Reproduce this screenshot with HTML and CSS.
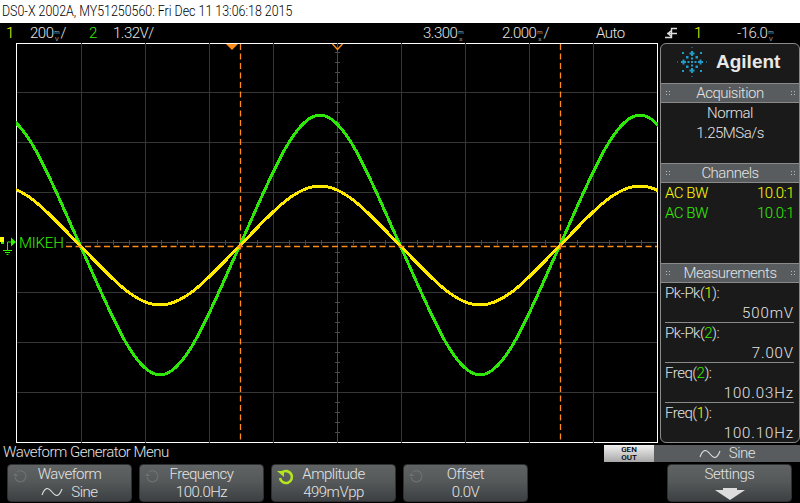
FILE: index.html
```html
<!DOCTYPE html>
<html>
<head>
    <meta charset="UTF-8">
    <title>DSO-X 2002A</title>
    <link rel="stylesheet" href="styles.css">
</head>
<body>
    <div class="title"><span>DS0-X 2002A, MY51250560: Fri Dec 11 13:06:18 2015</span></div>
    <div class="status">
        <span class="status__item s1 yellow">1</span>
        <span class="status__item s2">200<span class="unit">m<br>V</span>/</span>
        <span class="status__item s3 green">2</span>
        <span class="status__item s4">1.32V/</span>
        <span class="status__item s5">3.300<span class="unit">m<br>s</span></span>
        <span class="status__item s6">2.000<span class="unit">m<br>s</span>/</span>
        <span class="status__item s7">Auto</span>
        <svg class="status__item s8" width="14" height="14" viewBox="0 0 14 14"><path d="M0 11.500h6.500V2.500H12M2 7.500h10M7 4L3 7.500 7 11" fill="none" stroke="#ddd" stroke-width="1.400"/></svg>
        <span class="status__item s9 yellow">1</span>
        <span class="status__item s10">-16.0<span class="unit">m<br>V</span></span>
    </div>
    <div class="middle">
        <div class="rail">
            <svg class="ground" width="16" height="20" viewBox="0 0 16 20">
                <path d="M0 1h4v5H0z" fill="#ffff00"/>
                <path d="M1 7h3" stroke="#33f000" stroke-width="2"/>
                <path d="M11 6H7.500V14" fill="none" stroke="#33f000"/>
                <path d="M11 1.500L16 6l-5 4.500z" fill="#33f000"/>
                <path d="M3 14.500h9M5 16.500h5M6.500 18.500h2" stroke="#33f000"/>
            </svg>
        </div>
        <div class="plot">
            <svg class="scope" width="642" height="400" viewBox="16 43 642 400">
                <g class="grid">
                    <path d="M81.500 43V443M145.500 43V443M209.500 43V443M273.500 43V443M401.500 43V443M465.500 43V443M529.500 43V443M593.500 43V443"/>
                    <path d="M17 92.500H657M17 142.500H657M17 192.500H657M17 292.500H657M17 342.500H657M17 392.500H657"/>
                </g>
                <g class="axis">
                    <path d="M337.500 43V443M66 242.500H657"/>
                    <path d="M335 52.500h5M335 62.500h5M335 72.500h5M335 82.500h5M335 102.500h5M335 112.500h5M335 122.500h5M335 132.500h5M335 152.500h5M335 162.500h5M335 172.500h5M335 182.500h5M335 202.500h5M335 212.500h5M335 222.500h5M335 232.500h5M335 252.500h5M335 262.500h5M335 272.500h5M335 282.500h5M335 302.500h5M335 312.500h5M335 322.500h5M335 332.500h5M335 352.500h5M335 362.500h5M335 372.500h5M335 382.500h5M335 402.500h5M335 412.500h5M335 422.500h5M335 432.500h5"/>
                    <path d="M97.500 240v5M113.500 240v5M129.500 240v5M161.500 240v5M177.500 240v5M193.500 240v5M225.500 240v5M241.500 240v5M257.500 240v5M289.500 240v5M305.500 240v5M321.500 240v5M353.500 240v5M369.500 240v5M385.500 240v5M417.500 240v5M433.500 240v5M449.500 240v5M481.500 240v5M497.500 240v5M513.500 240v5M545.500 240v5M561.500 240v5M577.500 240v5M609.500 240v5M625.500 240v5M641.500 240v5"/>
                </g>
                <path class="green-wave" d="M0 115C26.100 115 51.050 181.400 80 245C108.950 308.600 133.900 375 160 375C186.100 375 211.050 308.600 240 245C268.950 181.400 293.900 115 320 115C346.100 115 371.050 181.400 400 245C428.950 308.600 453.900 375 480 375C506.100 375 531.050 308.600 560 245C588.950 181.400 613.900 115 640 115C666.100 115 691.050 181.400 720 245"/>
                <path class="yellow-wave" d="M0 186C26.100 186 51.050 216 80 245.500C108.950 275 133.900 305 160 305C186.100 305 211.050 275 240 245.500C268.950 216 293.900 186 320 186C346.100 186 371.050 216 400 245.500C428.950 275 453.900 305 480 305C506.100 305 531.050 275 560 245.500C588.950 216 613.900 186 640 186C666.100 186 691.050 216 720 245.500"/>
                <path class="cursor" d="M240.500 44V443M560.500 44V443M66 246.500H657"/>
                <path d="M226 44h12l-6 6z" fill="#ff8c1a"/>
                <path d="M332.500 44l5 5.500 5-5.500" fill="none" stroke="#ff8c1a" stroke-width="1.500"/>
            </svg>
            <span class="label">MIKEH</span>
        </div>
        <div class="side">
            <div class="logo">
                <svg width="30" height="30" viewBox="0 0 30 30">
                    <g fill="#1f9cc8">
                        <path d="M14 4h2v1.500h1.500v2H16V9h-2V7.500h-1.500v-2H14zM14 21h2v1.500h1.500v2H16V26h-2v-1.500h-1.500v-2H14zM4 14h1.500v-1.500h2V14H9v2H7.500v1.500h-2V16H4zM21 14h1.500v-1.500h2V14H26v2h-1.500v1.500h-2V16H21z"/>
                        <path d="M14 10.500h2v2h-2zM14 17.500h2v2h-2zM10.500 14h2v2h-2zM17.500 14h2v2h-2zM14 14h2v2h-2z"/>
                        <path d="M9 9h2.500v2.500H9zM18.500 9H21v2.500h-2.500zM9 18.500h2.500V21H9zM18.500 18.500H21V21h-2.500z"/>
                        <path d="M5 5h2v2H5zM23 5h2v2h-2zM5 23h2v2H5zM23 23h2v2h-2z"/>
                        <path d="M14.500 0h1v1h-1zM14.500 29h1v1h-1zM0 14.500h1v1H0zM29 14.500h1v1h-1z"/>
                    </g>
                </svg>
                <span class="logo__text">Agilent</span>
            </div>
            <div class="head"><span class="dots"></span>Acquisition<span class="dots"></span></div>
            <div class="box box--acq">
                <div>Normal</div>
                <div>1.25MSa/s</div>
            </div>
            <div class="head"><span class="dots"></span>Channels<span class="dots"></span></div>
            <div class="box box--chan">
                <div class="row yellow"><span>AC BW</span><span>10.0:1</span></div>
                <div class="row green"><span>AC BW</span><span>10.0:1</span></div>
            </div>
            <div class="head"><span class="dots"></span>Measurements<span class="dots"></span></div>
            <div class="meas">
                <div class="meas__item"><div>Pk-Pk(<span class="yellow">1</span>):</div><div class="meas__val">500mV</div></div>
                <div class="meas__item"><div>Pk-Pk(<span class="green">2</span>):</div><div class="meas__val">7.00V</div></div>
                <div class="meas__item"><div>Freq(<span class="green">2</span>):</div><div class="meas__val">100.03Hz</div></div>
                <div class="meas__item meas__item--last"><div>Freq(<span class="yellow">1</span>):</div><div class="meas__val">100.10Hz</div></div>
            </div>
        </div>
    </div>
    <div class="footer">
        <div class="menu-title">
            <span>Waveform Generator Menu</span>
            <div class="gen">
                <div class="gen__btn"><div>GEN</div><div>OUT</div></div>
                <div class="gen__val">
                    <svg width="22" height="12" viewBox="0 0 22 12"><path d="M1 9C4 1 7 1 11 6S18 11 21 3" fill="none" stroke="#ddd" stroke-width="1.100"/></svg>
                    Sine
                </div>
            </div>
        </div>
        <div class="keys">
            <div class="key">
                <svg class="knob" width="15" height="15" viewBox="0 0 15 15"><path d="M4 3A5.500 5.500 0 1 1 2 8" fill="none" stroke="#6e7272" stroke-width="1.200"/><path d="M0 7h5L2.500 4z" fill="#6e7272"/></svg>
                <div>Waveform</div>
                <div class="key__val"><svg width="22" height="12" viewBox="0 0 22 12"><path d="M1 9C4 1 7 1 11 6S18 11 21 3" fill="none" stroke="#ddd" stroke-width="1.100"/></svg> Sine</div>
            </div>
            <div class="key">
                <svg class="knob" width="15" height="15" viewBox="0 0 15 15"><path d="M4 3A5.500 5.500 0 1 1 2 8" fill="none" stroke="#6e7272" stroke-width="1.200"/><path d="M0 7h5L2.500 4z" fill="#6e7272"/></svg>
                <div>Frequency</div>
                <div class="key__val">100.0Hz</div>
            </div>
            <div class="key">
                <svg class="knob" width="17" height="17" viewBox="0 0 17 17"><path d="M5 3.500A6 6 0 1 1 3 9" fill="none" stroke="#b5e61d" stroke-width="2.600"/><path d="M0 2h7v6z" fill="#b5e61d"/></svg>
                <div>Amplitude</div>
                <div class="key__val">499mVpp</div>
            </div>
            <div class="key">
                <svg class="knob" width="15" height="15" viewBox="0 0 15 15"><path d="M4 3A5.500 5.500 0 1 1 2 8" fill="none" stroke="#6e7272" stroke-width="1.200"/><path d="M0 7h5L2.500 4z" fill="#6e7272"/></svg>
                <div>Offset</div>
                <div class="key__val">0.0V</div>
            </div>
            <div class="key key--right">
                <div>Settings</div>
                <svg class="key__arrow" width="30" height="12" viewBox="0 0 30 12"><path d="M0 2h8V0h14v2h8L15 12z" fill="#ddd"/></svg>
            </div>
        </div>
    </div>
</body>
</html>
```

FILE: styles.css
```css
* {
    box-sizing: border-box;
}
body {
    margin: 0;
    width: 800px;
    height: 503px;
    overflow: hidden;
    background: #000;
    color: #e4e4e4;
    font-family: 'Roboto', sans-serif;
    font-weight: 300;
    font-size: 15px;
    letter-spacing: -0.500px;
}
.yellow {
    color: #ffff00;
}
.green {
    color: #33f000;
}
.title {
    height: 23px;
    background: #fff;
    color: #000;
    font-size: 14.500px;
    letter-spacing: 0;
    line-height: 23px;
    padding-left: 2px;
    white-space: nowrap;
}
.title span {
    display: inline-block;
    transform: scaleX(0.855);
    transform-origin: left;
}
.status {
    height: 20px;
    position: relative;
    line-height: 20px;
}
.status__item {
    position: absolute;
    top: 0;
    white-space: nowrap;
}
.unit {
    display: inline-block;
    width: 7px;
    font-size: 6px;
    letter-spacing: 0;
    line-height: 7px;
    text-align: center;
    vertical-align: -3px;
}
.s1 { left: 6px; }
.s2 { left: 30px; }
.s3 { left: 89px; }
.s4 { left: 113px; }
.s5 { left: 423px; }
.s6 { left: 502px; }
.s7 { left: 596px; }
.s8 { left: 665px; top: 3px; }
.s9 { left: 694px; }
.s10 { left: 737px; }
.middle {
    display: flex;
    height: 400px;
}
.rail {
    width: 16px;
}
.ground {
    display: block;
    margin-top: 193px;
}
.plot {
    position: relative;
    width: 642px;
    height: 400px;
    border: 1px solid #fff;
}
.scope {
    position: absolute;
    top: -1px;
    left: -1px;
    display: block;
}
.grid {
    stroke: #363636;
    shape-rendering: crispEdges;
}
.axis {
    stroke: #4a4a4a;
    shape-rendering: crispEdges;
}
.green-wave {
    fill: none;
    stroke: #2ee80a;
    stroke-width: 3;
    shape-rendering: crispEdges;
}
.yellow-wave {
    fill: none;
    stroke: #ffea00;
    stroke-width: 3;
    shape-rendering: crispEdges;
}
.cursor {
    fill: none;
    stroke: #ff8c1a;
    stroke-width: 1.300;
    stroke-dasharray: 6 3.500;
}
.label {
    position: absolute;
    left: 2px;
    top: 190px;
    color: #33f000;
    font-size: 15px;
    line-height: 18px;
    letter-spacing: -0.200px;
}
.side {
    width: 140px;
    height: 400px;
    margin-left: 2px;
    background: #1a1a1a;
    border: 1px solid #8a8a8a;
    border-radius: 6px;
}
.logo {
    height: 40px;
    display: flex;
    align-items: center;
    padding: 0 0 4px 16px;
    gap: 9px;
    border-bottom: 1px solid #8a8a8a;
}
.logo__text {
    color: #e8e8e8;
    font-family: 'Liberation Sans', sans-serif;
    font-weight: 700;
    font-size: 19px;
    letter-spacing: 0;
}
.head {
    height: 19px;
    background: #585c5e;
    border-bottom: 1px solid #8a8a8a;
    display: flex;
    justify-content: space-between;
    align-items: center;
    padding: 0 4px;
    line-height: 18px;
}
.dots {
    width: 5px;
    height: 7px;
    background-image: radial-gradient(#bbb 1px, transparent 1px);
    background-size: 3px 3px;
}
.box {
    text-align: center;
    line-height: 20px;
    border-bottom: 1px solid #8a8a8a;
}
.box--acq {
    height: 61px;
}
.box--chan {
    height: 81px;
    padding: 0 5px 0 4px;
}
.row {
    display: flex;
    justify-content: space-between;
    line-height: 20px;
}
.meas {
    padding: 0 5px 0 4px;
}
.meas__item {
    height: 40px;
    border-bottom: 1px solid #8a8a8a;
    line-height: 20px;
}
.meas__item--last {
    border-bottom: none;
}
.meas__val {
    text-align: right;
    letter-spacing: 0.900px;
}
.footer {
    height: 60px;
}
.menu-title {
    height: 21px;
    display: flex;
    justify-content: space-between;
    padding-left: 3px;
    line-height: 19px;
}
.gen {
    display: flex;
    margin-top: 2px;
    height: 17px;
}
.gen__btn {
    width: 50px;
    background: linear-gradient(#f0f0f0, #a8a8a8);
    color: #000;
    font-size: 8px;
    font-weight: 500;
    letter-spacing: 0;
    line-height: 8px;
    text-align: center;
    padding-top: 1px;
}
.gen__val {
    width: 146px;
    background: #585c5e;
    display: flex;
    align-items: center;
    justify-content: center;
    gap: 8px;
}
.keys {
    display: flex;
    gap: 7px;
    padding-left: 7px;
}
.key {
    position: relative;
    width: 125px;
    height: 38px;
    background: linear-gradient(#5f6364, #55595a 45%, #3c4042);
    border: 1px solid #2e3031;
    border-radius: 4px;
    text-align: center;
    line-height: 18px;
}
.key--right {
    margin-left: 132px;
}
.key__val {
    display: flex;
    justify-content: center;
    align-items: center;
    gap: 8px;
}
.knob {
    position: absolute;
    left: 5px;
    top: 4px;
}
.key__arrow {
    display: block;
    margin: 5px auto 0;
}
```
